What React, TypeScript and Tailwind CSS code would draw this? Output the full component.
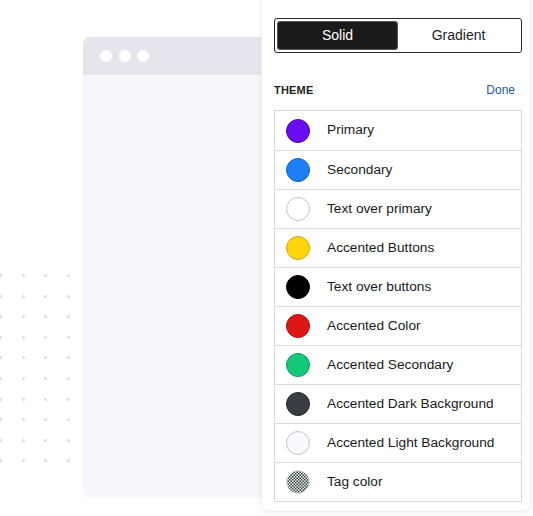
import React from 'react';

type Swatch = { label: string; color?: string; ring: string; checker?: boolean };

const swatches: Swatch[] = [
  { label: 'Primary', color: 'bg-[#6a0cf2]', ring: 'border-[#4a0aa8]' },
  { label: 'Secondary', color: 'bg-[#1d80f6]', ring: 'border-[#1660c0]' },
  { label: 'Text over primary', color: 'bg-white', ring: 'border-[#c4c4c4]' },
  { label: 'Accented Buttons', color: 'bg-[#ffd60a]', ring: 'border-[#c9a50c]' },
  { label: 'Text over buttons', color: 'bg-black', ring: 'border-black' },
  { label: 'Accented Color', color: 'bg-[#e01616]', ring: 'border-[#a81414]' },
  { label: 'Accented Secondary', color: 'bg-[#12c97a]', ring: 'border-[#0e9a5e]' },
  { label: 'Accented Dark Background', color: 'bg-[#3a3e44]', ring: 'border-[#22252a]' },
  { label: 'Accented Light Background', color: 'bg-[#f8f9fc]', ring: 'border-[#c4c4c4]' },
  { label: 'Tag color', ring: 'border-[#d0d6d0]', checker: true },
];

function Checker() {
  // fine checkerboard, like a transparent swatch
  return (
    <svg width="24" height="24" viewBox="0 0 24 24" className="block">
      <defs>
        <pattern id="chk" width="3" height="3" patternUnits="userSpaceOnUse">
          <rect width="3" height="3" fill="#eef2ee" />
          <rect width="1.5" height="1.5" fill="#34403a" />
          <rect x="1.5" y="1.5" width="1.5" height="1.5" fill="#34403a" />
        </pattern>
      </defs>
      <circle cx="12" cy="12" r="11.5" fill="url(#chk)" stroke="#dfe6df" strokeWidth="1" />
    </svg>
  );
}

function DotGrid() {
  const cells = Array.from({ length: 40 });
  return (
    <div className="grid grid-cols-4 gap-x-[19.7px] gap-y-[17.6px]">
      {cells.map((_, i) => (
        <div key={i} className="h-[3px] w-[3px] rounded-full bg-[#dcd7fb]" />
      ))}
    </div>
  );
}

export default function App() {
  return (
    <div
      className="relative h-[516px] w-[533px] overflow-hidden bg-white"
      style={{ fontFamily: '"Liberation Sans", Arial, sans-serif' }}
    >
      <div className="absolute left-[-1px] top-[274px]">
        <DotGrid />
      </div>

      <div className="absolute left-[83px] top-[37px] flex h-[461px] w-[220px] flex-col overflow-hidden rounded-[7px] bg-[#f7f6fb]">
        <div className="flex h-[38px] items-center gap-[6.5px] bg-[#e6e4ec] pl-[17px]">
          <span className="h-[12px] w-[12px] rounded-full bg-white" />
          <span className="h-[12px] w-[12px] rounded-full bg-white" />
          <span className="h-[12px] w-[12px] rounded-full bg-white" />
        </div>
      </div>

      <div className="absolute left-[261px] top-[-12px] w-[270px] rounded-[9px] border border-[#efefef] bg-white pb-[9px] pl-[12px] pr-[8px] pt-[29px] shadow-[0_2px_8px_rgba(0,0,0,0.05)]">
        <div className="grid h-[35px] grid-cols-2 rounded-[3px] border border-[#2a2a2a] p-[2px]">
          <button className="rounded-[3px] border border-[#555] bg-[#1b1b1b] text-[14px] text-white">
            Solid
          </button>
          <button className="text-[14px] text-[#222]">Gradient</button>
        </div>

        <div className="mt-[28px] flex items-center justify-between pr-[7px]">
          <span className="text-[11px] font-bold tracking-[0.2px] text-[#1f1f1f]">THEME</span>
          <span className="text-[12px] text-[#1c57a8]">Done</span>
        </div>

        <div className="mt-[11px] border border-[#d9d9d9]">
          {swatches.map((s, idx) => (
            <div
              key={s.label}
              className={`flex h-[39px] items-center pl-[11px] ${
                idx > 0 ? 'border-t border-[#dcdcdc]' : ''
              }`}
            >
              {s.checker ? (
                <Checker />
              ) : (
                <span className={`h-[24px] w-[24px] rounded-full border ${s.color} ${s.ring}`} />
              )}
              <span className="ml-[17px] text-[13.7px] text-[#1a1a1a]">{s.label}</span>
            </div>
          ))}
        </div>
      </div>
    </div>
  );
}
